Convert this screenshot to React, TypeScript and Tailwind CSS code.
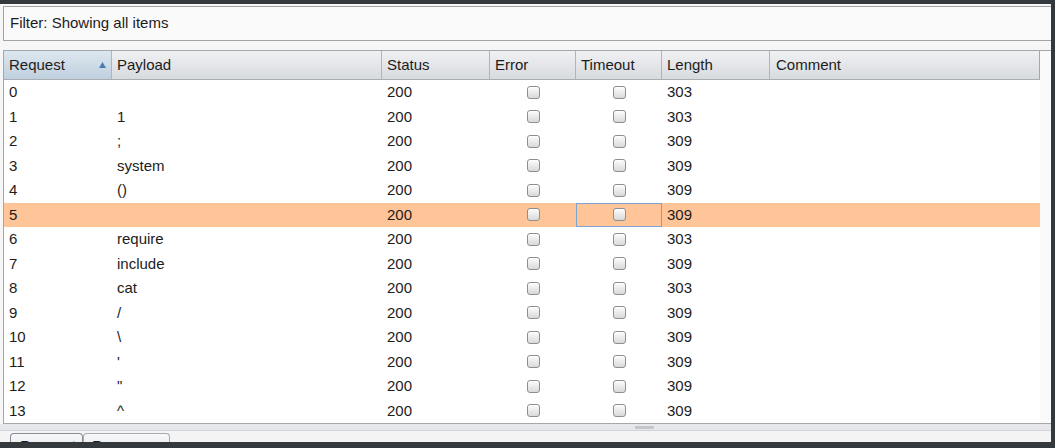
import React from "react";

const rows: [string, string, string, string][] = [
  ["0", "", "200", "303"],
  ["1", "1", "200", "303"],
  ["2", ";", "200", "309"],
  ["3", "system", "200", "309"],
  ["4", "()", "200", "309"],
  ["5", "", "200", "309"],
  ["6", "require", "200", "303"],
  ["7", "include", "200", "309"],
  ["8", "cat", "200", "303"],
  ["9", "/", "200", "309"],
  ["10", "\\", "200", "309"],
  ["11", "'", "200", "309"],
  ["12", "\"", "200", "309"],
  ["13", "^", "200", "309"],
];

function Check() {
  return (
    <span className="block w-[13px] h-[13px] rounded-[3px] border border-[#8e8e8e] bg-linear-to-b from-[#fdfdfd] to-[#d9d9d9] shadow-[inset_0_1px_0_#ffffff]" />
  );
}

export default function App() {
  return (
    <div
      className="w-[1055px] h-[448px] bg-[#33393c] pt-[4px] overflow-hidden text-[15px] text-[#1c1c1c]"
      style={{ fontFamily: '"Liberation Sans", Arial, sans-serif' }}
    >
      <div className="w-[1051px] h-[438px] bg-[#f6f6f6] flex flex-col overflow-hidden">
        {/* Filter box */}
        <div className="ml-[3px] mt-[2px] h-[35px] border-t border-l border-b border-[#a3a3a3] bg-[#fafafa] flex items-center pl-[6px] shrink-0">
          Filter: Showing all items
        </div>

        {/* Table */}
        <div className="mt-[9px] ml-[3px] border-t border-l border-b border-[#a5a8ab] flex shrink-0">
          <div className="w-[1036px] flex flex-col bg-white">
            {/* Header */}
            <div className="flex h-[29px] border-b border-[#a9acb0]">
              <div className="w-[108px] flex items-center justify-between pl-[5px] pr-[5px] border-r border-[#b1b4b8] bg-linear-to-b from-[#dde7ef] to-[#bfd0de]">
                <span>Request</span>
                <svg width="7" height="6" viewBox="0 0 7 6" className="mb-[1px]">
                  <polygon points="3.5,0 7,6 0,6" fill="#4b7cad" />
                </svg>
              </div>
              <div className="w-[270px] flex items-center pl-[5px] border-r border-[#b1b4b8] bg-linear-to-b from-[#f0f1f3] to-[#d7dade]">
                Payload
              </div>
              <div className="w-[108px] flex items-center pl-[5px] border-r border-[#b1b4b8] bg-linear-to-b from-[#f0f1f3] to-[#d7dade]">
                Status
              </div>
              <div className="w-[86px] flex items-center pl-[5px] border-r border-[#b1b4b8] bg-linear-to-b from-[#f0f1f3] to-[#d7dade]">
                Error
              </div>
              <div className="w-[86px] flex items-center pl-[5px] border-r border-[#b1b4b8] bg-linear-to-b from-[#f0f1f3] to-[#d7dade]">
                Timeout
              </div>
              <div className="w-[108px] flex items-center pl-[5px] border-r border-[#b1b4b8] bg-linear-to-b from-[#f0f1f3] to-[#d7dade]">
                Length
              </div>
              <div className="w-[270px] flex items-center pl-[6px] border-r border-[#a5a8ab] bg-linear-to-b from-[#f0f1f3] to-[#d7dade]">
                Comment
              </div>
            </div>
            {/* Rows */}
            {rows.map((r, i) => {
              const sel = i === 5;
              return (
                <div
                  key={i}
                  className={`flex h-[24.5px] items-center ${sel ? "bg-[#ffc497]" : "bg-white"}`}
                >
                  <div className="w-[108px] pl-[5px]">{r[0]}</div>
                  <div className="w-[270px] pl-[5px]">{r[1]}</div>
                  <div className="w-[108px] pl-[5px]">{r[2]}</div>
                  <div className="w-[86px] h-full flex items-center justify-center">
                    <Check />
                  </div>
                  <div
                    className={`w-[86px] h-full flex items-center justify-center ${
                      sel ? "border border-[#7ea4cf]" : ""
                    }`}
                  >
                    <Check />
                  </div>
                  <div className="w-[108px] pl-[5px]">{r[3]}</div>
                  <div className="w-[270px]" />
                </div>
              );
            })}
          </div>
          <div className="flex-1 bg-[#fafafa]" />
        </div>

        {/* Splitter */}
        <div className="h-[7px] shrink-0 bg-[#e5e7eb] border-b border-[#cfd2d8] flex items-center">
          <div className="ml-[635px] w-[19px] h-[3px] bg-[#c4c6cc] rounded-[1px]" />
        </div>

        {/* Tabs */}
        <div className="flex pl-[10px] pt-[2px] shrink-0 bg-[#f4f4f4]">
          <div className="w-[73px] h-[24px] rounded-t-[4px] border border-b-0 border-[#878d93] bg-linear-to-b from-[#f7f8f9] to-[#dfe2e6] pl-[9px] pt-[3px] leading-[17px]">
            Request
          </div>
          <div className="w-[87px] h-[24px] rounded-t-[4px] border border-b-0 border-[#a7abb0] bg-linear-to-b from-[#f7f8f9] to-[#e4e6e9] pl-[8px] pt-[3px] leading-[17px]">
            Response
          </div>
        </div>
      </div>
    </div>
  );
}
